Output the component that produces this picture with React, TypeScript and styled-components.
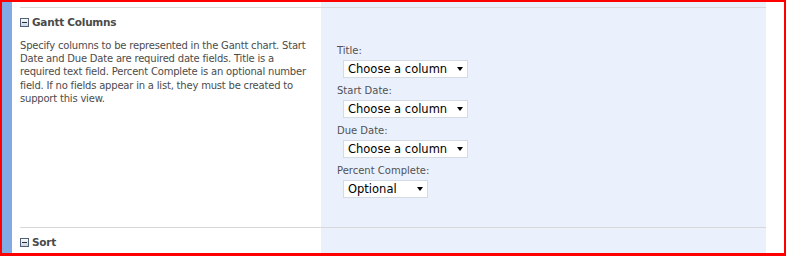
import styled, { createGlobalStyle } from "styled-components";

const GlobalStyle = createGlobalStyle`
  html, body {
    margin: 0;
    padding: 0;
    background: #ffffff;
  }
`;

type FieldType = {
  label: string;
  value: string;
  width: number;
};

const fieldList: FieldType[] = [
  { label: "Title:", value: "Choose a column", width: 125 },
  { label: "Start Date:", value: "Choose a column", width: 125 },
  { label: "Due Date:", value: "Choose a column", width: 125 },
  { label: "Percent Complete:", value: "Optional", width: 85 },
];

const descLines = [
  "Specify columns to be represented in the Gantt chart. Start",
  "Date and Due Date are required date fields. Title is a",
  "required text field. Percent Complete is an optional number",
  "field. If no fields appear in a list, they must be created to",
  "support this view.",
];

const CollapseIcon = () => (
  <svg width="9" height="9" viewBox="0 0 9 9">
    <defs>
      <linearGradient id="boxFill" x1="0" y1="0" x2="0" y2="1">
        <stop offset="0" stopColor="#ffffff" />
        <stop offset="1" stopColor="#c9d3df" />
      </linearGradient>
    </defs>
    <rect x="0.5" y="0.5" width="8" height="8" fill="url(#boxFill)" stroke="#4f6078" />
    <rect x="2" y="4" width="5" height="1" fill="#26313f" />
  </svg>
);

const App = () => {
  return (
    <>
      <GlobalStyle />
      <Frame>
        <SideStrip />
        <Main>
          <Section $height={220}>
            <LeftCell>
              <Rule />
              <SectionHeader>
                <CollapseIcon />
                <span>Gantt Columns</span>
              </SectionHeader>
              <Description>
                {descLines.map((line) => (
                  <div key={line}>{line}</div>
                ))}
              </Description>
            </LeftCell>
            <RightCell>
              <Rule />
              <FieldList>
                {fieldList.map(({ label, value, width }) => (
                  <Field key={label}>
                    <FieldLabel>{label}</FieldLabel>
                    <SelectBox $width={width}>
                      <span>{value}</span>
                      <Arrow />
                    </SelectBox>
                  </Field>
                ))}
              </FieldList>
            </RightCell>
            <EdgeCell />
          </Section>
          <Section $height={40}>
            <LeftCell>
              <Rule />
              <SectionHeader>
                <CollapseIcon />
                <span>Sort</span>
              </SectionHeader>
            </LeftCell>
            <RightCell>
              <Rule />
            </RightCell>
            <EdgeCell />
          </Section>
        </Main>
      </Frame>
    </>
  );
};

export default App;

const Frame = styled.div`
  display: flex;
  box-sizing: border-box;
  width: 786px;
  height: 256px;
  border-top: 2px solid #ff0000;
  border-left: 2px solid #ff0000;
  border-right: 2px solid #ff0000;
  border-bottom: 3px solid #ff0000;
  overflow: hidden;
  font-family: "DejaVu Sans", Verdana, sans-serif;
`;

const SideStrip = styled.div`
  flex: 0 0 10px;
  background: #82abe6;
`;

const Main = styled.div`
  flex: 1;
  display: flex;
  flex-direction: column;
`;

const Section = styled.div<{ $height: number }>`
  display: grid;
  grid-template-columns: 309px 445px 1fr;
  flex: 0 0 ${(props) => props.$height}px;
`;

const LeftCell = styled.div`
  padding: 5px 0 0 8px;
  background: #ffffff;
`;

const RightCell = styled.div`
  padding-top: 5px;
  background: #eaf1fd;
`;

const EdgeCell = styled.div`
  background: #ffffff;
`;

const Rule = styled.div`
  height: 1px;
  background: #d8d8d8;
`;

const SectionHeader = styled.div`
  display: flex;
  align-items: center;
  gap: 3px;
  height: 16px;
  margin-top: 6px;
  font-size: 10.5px;
  letter-spacing: -0.25px;
  font-weight: bold;
  color: #4a4a4a;
`;

const Description = styled.div`
  margin-top: 9px;
  font-size: 10px;
  letter-spacing: -0.2px;
  line-height: 13.2px;
  color: #4c4c4c;
  white-space: nowrap;
`;

const FieldList = styled.div`
  display: flex;
  flex-direction: column;
  padding: 34px 0 0 16px;
`;

const Field = styled.div`
  display: flex;
  flex-direction: column;
  align-items: flex-start;
`;

const FieldLabel = styled.div`
  height: 16px;
  padding-top: 1px;
  line-height: 16px;
  font-size: 10px;
  color: #525252;
`;

const SelectBox = styled.div<{ $width: number }>`
  display: flex;
  align-items: center;
  justify-content: space-between;
  box-sizing: border-box;
  width: ${(props) => props.$width}px;
  height: 18px;
  margin: 1px 0 4px 6px;
  padding: 0 4px 0 4px;
  background: #ffffff;
  border: 1px solid #d5dbe4;
  font-size: 11.5px;
  color: #000000;
`;

const Arrow = styled.span`
  width: 0;
  height: 0;
  border-left: 3.5px solid transparent;
  border-right: 3.5px solid transparent;
  border-top: 4px solid #000000;
`;
